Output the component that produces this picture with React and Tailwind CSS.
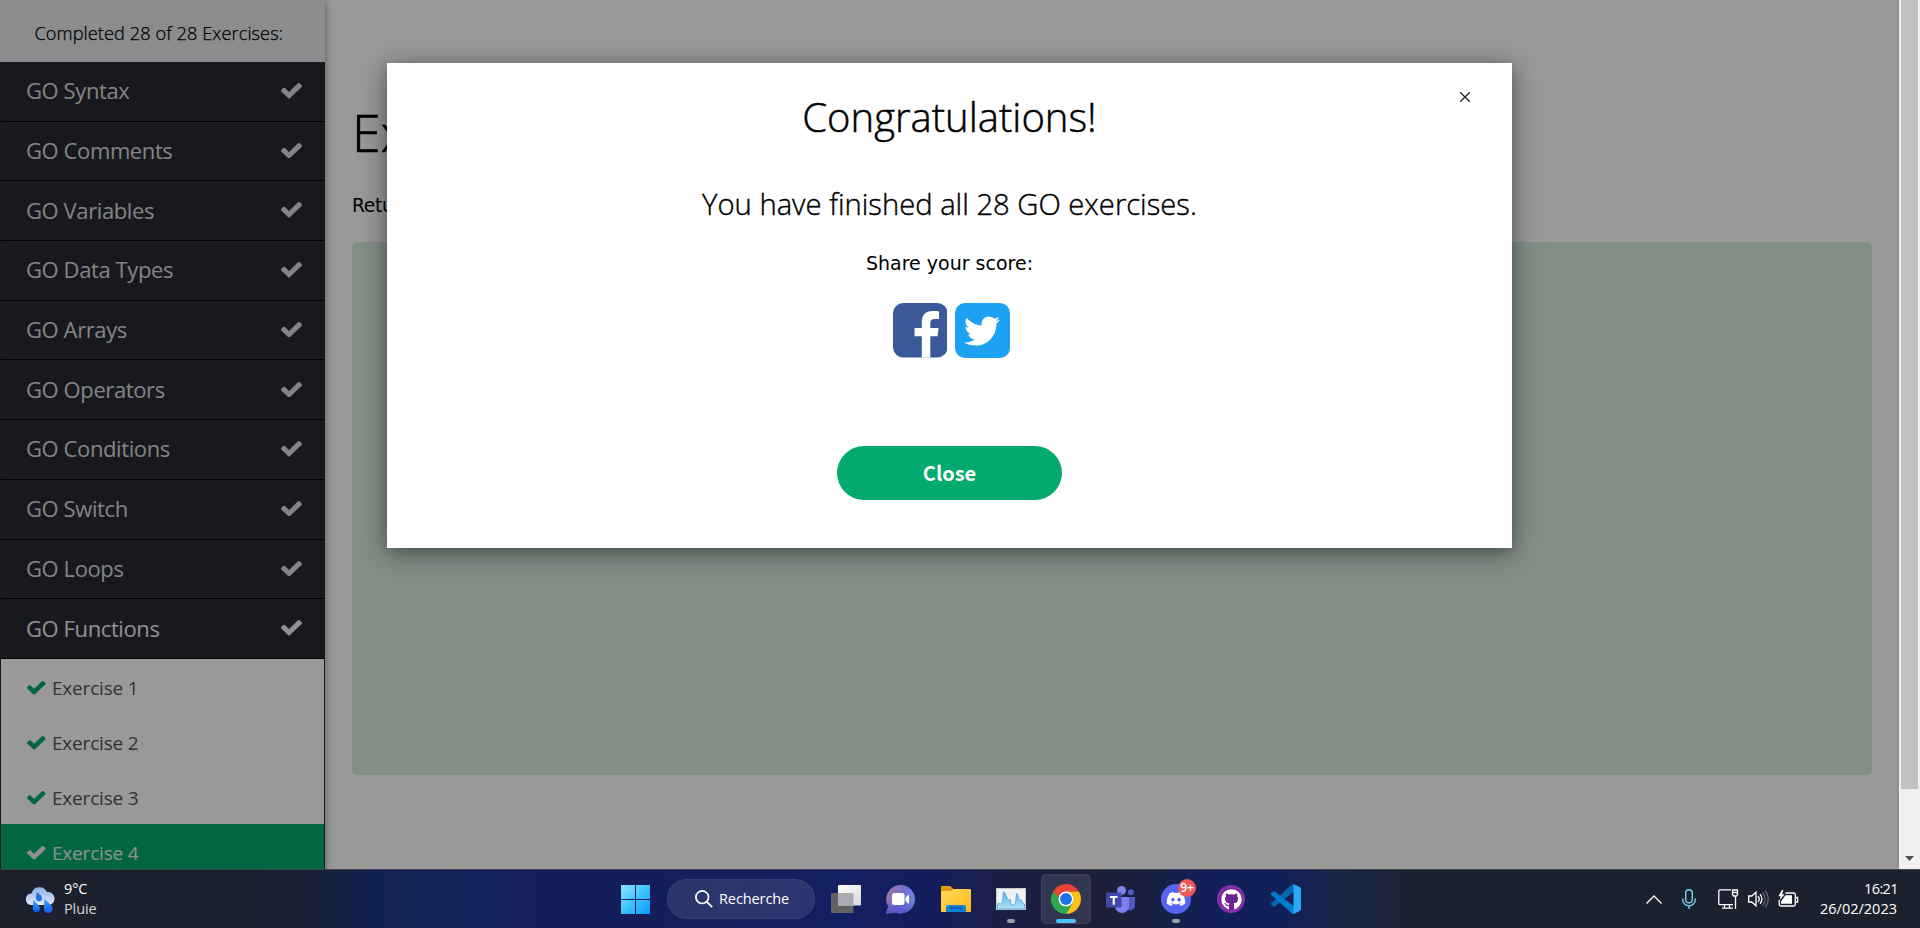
import { FaTwitter, FaDiscord, FaGithub } from "react-icons/fa";

const TOPICS = [
  "GO Syntax",
  "GO Comments",
  "GO Variables",
  "GO Data Types",
  "GO Arrays",
  "GO Operators",
  "GO Conditions",
  "GO Switch",
  "GO Loops",
  "GO Functions",
];

const EXERCISES = ["Exercise 1", "Exercise 2", "Exercise 3", "Exercise 4"];

function Check({ className }) {
  return (
    <svg viewBox="121 334 1550 1188" preserveAspectRatio="none" fill="currentColor" className={className}>
      <path d="M1671 566q0 40-28 68l-724 724-136 136q-28 28-68 28t-68-28l-136-136-362-362q-28-28-28-68t28-68l136-136q28-28 68-28t68 28l294 295 656-657q28-28 68-28t68 28l136 136q28 28 28 68z" />
    </svg>
  );
}

function Sidebar() {
  return (
    <aside className="flex h-[869px] w-[325px] shrink-0 flex-col overflow-hidden bg-[#282a35] shadow-[0_2px_8px_rgba(0,0,0,0.45)]">
      <div className="flex h-[62px] shrink-0 items-center bg-[#e7e9eb] pt-[5px] pl-[34.5px] font-['Open_Sans'] text-[18.2px] font-light tracking-[0.07px] whitespace-nowrap text-black [-webkit-text-stroke:0.25px]">
        Completed 28 of 28 Exercises:
      </div>
      <nav className="px-px">
        {TOPICS.map((topic, i) => (
          <div
            key={topic}
            className={
              "flex h-[59.7px] items-center justify-between border-b border-black pr-[22px] pl-[25px] " +
              (i === TOPICS.length - 1 ? "text-[#f1f1f1]" : "text-[#dddddd]")
            }
          >
            <span className="mb-[2px] font-['Open_Sans'] text-[22px] leading-[30px] tracking-[-0.4px]">{topic}</span>
            <Check className="mb-[1px] h-[15.5px] w-[21px]" />
          </div>
        ))}
      </nav>
      <div className="mx-px flex-1 bg-white">
        {EXERCISES.map((exercise, i) => (
          <div
            key={exercise}
            className={
              "flex h-[55px] items-center pt-[3px] pl-[26px] " + (i === 3 ? "bg-[#04aa6d] text-[#f1f1f1]" : "text-[#555555]")
            }
          >
            <Check className={"h-[13.5px] w-[18.5px] " + (i === 3 ? "" : "text-[#04aa6d]")} />
            <span className="ml-[6.5px] font-['Open_Sans'] text-[19px] leading-[26px] tracking-[-0.2px]">{exercise}</span>
          </div>
        ))}
      </div>
    </aside>
  );
}

function Modal() {
  return (
    <div className="absolute top-[63px] left-[387px] flex h-[485px] w-[1125px] flex-col items-center bg-white text-black shadow-[0_4px_18px_rgba(0,0,0,0.35),0_6px_32px_rgba(0,0,0,0.2)]">
      <svg viewBox="0 0 10 10" className="absolute top-[29px] left-[1072.5px] size-[10px]" stroke="#222" strokeWidth="1.3" fill="none">
        <path d="M0.3 0.3 9.7 9.7M9.7 0.3 0.3 9.7" />
      </svg>
      <h2 className="mt-[27px] font-['Open_Sans'] text-[40px] leading-[54px] font-light [-webkit-text-stroke:0.5px]">
        Congratulations!
      </h2>
      <p className="mt-[40px] font-['Open_Sans'] text-[29.2px] leading-[40px] font-light [-webkit-text-stroke:0.4px]">
        You have finished all 28 GO exercises.
      </p>
      <p className="mt-[26px] font-['DejaVu_Sans'] text-[19px] leading-[26px]">Share your score:</p>
      <div className="mt-[27px] ml-[3px] flex gap-[8px]">
        <svg viewBox="0 0 53 54.5" preserveAspectRatio="none" className="h-[54.5px] w-[54.5px]">
          <rect width="53" height="54.5" rx="10" fill="#3b5998" />
          <path
            fill="#fff"
            d="M28 54.5V33.3H21V25h7v-6.2C28 12 31.8 8 38.6 8c2.4 0 4.6.1 6.2.4V16h-4c-3.2 0-4.5 1.3-4.5 4.2V25h8.1l-1.1 8.3h-7v21.2z"
          />
        </svg>
        <div className="flex h-[54.5px] w-[54.5px] items-center justify-center rounded-[10px] bg-[#1da1f2]">
          <FaTwitter className="mt-px size-[36px] text-white" />
        </div>
      </div>
      <button className="mt-[88px] h-[54px] w-[225px] rounded-full bg-[#04aa6d] pb-px font-['Noto_Sans_CJK_SC'] text-[20px] leading-[53px] font-bold text-white">
        Close
      </button>
    </div>
  );
}

function Scrollbar() {
  return (
    <div className="flex h-[869px] w-[21px] flex-col bg-[#f0f0f0] px-[2px]">
      <div className="h-[789px] bg-[#c1c1c1]" />
      <svg viewBox="0 0 9 5" className="mt-[67px] ml-[4px] h-[5px] w-[9px]" fill="#505050">
        <path d="M0 0h9L4.5 5z" />
      </svg>
    </div>
  );
}

function WeatherIcon() {
  return (
    <svg viewBox="0 0 30 27" className="h-[27px] w-[30px]">
      <defs>
        <linearGradient id="cloud" x1="0" y1="0" x2="0" y2="1">
          <stop offset="0" stopColor="#8fb2ea" />
          <stop offset="1" stopColor="#dfe8f8" />
        </linearGradient>
        <linearGradient id="drop" x1="0" y1="0" x2="0" y2="1">
          <stop offset="0" stopColor="#4ba2f7" />
          <stop offset="1" stopColor="#0a5bef" />
        </linearGradient>
      </defs>
      <path d="M6 19a5.800 5.800 0 0 1 0-11.500h.5a8.300 8.300 0 0 1 15.500-1.500A6.500 6.500 0 0 1 24 19z" fill="url(#cloud)" />
      <path d="M8 14c3.500 3 7 6 7 8.500a3.600 3.600 0 0 1-7.200 0c0-3 .8-5 .2-8.500z" fill="url(#drop)" />
      <path d="M19 13c5 3.500 8.500 7 8.500 9.800a4.300 4.300 0 0 1-8.600 0c0-3 .8-6 .1-9.800z" fill="url(#drop)" />
      <path d="M11.500 6c3.200 2.200 5.500 4 5.500 6.300a3 3 0 0 1-6 0c0-2.300.8-3.500.5-6.300z" fill="#1a73e8" />
    </svg>
  );
}

function WindowsIcon() {
  return (
    <svg viewBox="0 0 29 29" className="size-[29px]">
      <defs>
        <linearGradient id="win" gradientUnits="userSpaceOnUse" x1="0" y1="0" x2="29" y2="29">
          <stop offset="0" stopColor="#8be4ff" />
          <stop offset="0.5" stopColor="#3fc4fd" />
          <stop offset="1" stopColor="#0a96fb" />
        </linearGradient>
      </defs>
      <path fill="url(#win)" d="M0 0h14v14H0zM15 0h14v14H15zM0 15h14v14H0zM15 15h14v14H15z" />
    </svg>
  );
}

function TaskViewIcon() {
  return (
    <svg viewBox="0 0 30 28" className="h-[28px] w-[30px]">
      <defs>
        <linearGradient id="tv" x1="0" y1="0" x2="1" y2="1">
          <stop offset="0" stopColor="#fff" />
          <stop offset="1" stopColor="#d8d8da" />
        </linearGradient>
      </defs>
      <rect y="8" width="22.500" height="20" rx="1" fill="#626264" />
      <rect x="7" width="23" height="20.500" rx="1" fill="url(#tv)" />
      <path d="M7 8h15.500v12.500H7z" fill="#acacb0" />
    </svg>
  );
}

function ChatIcon() {
  return (
    <svg viewBox="0 0 29 29" className="mr-px size-[29px]">
      <defs>
        <linearGradient id="chat" x1="0" y1="0.200" x2="1" y2="0.600">
          <stop offset="0" stopColor="#a673a6" />
          <stop offset="0.550" stopColor="#6f6fd0" />
          <stop offset="1" stopColor="#6b8be8" />
        </linearGradient>
        <linearGradient id="chatShade" x1="0" y1="0" x2="0" y2="1">
          <stop offset="0.500" stopColor="#5557c8" stopOpacity="0" />
          <stop offset="1" stopColor="#5557c8" />
        </linearGradient>
      </defs>
      <path d="M14.500 0a14.200 14.200 0 1 1-5 27.400L1 28.500c-.8 0-1-.6-.7-1.200L2.300 21.500A14.200 14.200 0 0 1 14.500 0z" fill="url(#chat)" />
      <path d="M14.500 0a14.200 14.200 0 1 1-5 27.400L1 28.500c-.8 0-1-.6-.7-1.200L2.300 21.500A14.200 14.200 0 0 1 14.500 0z" fill="url(#chatShade)" />
      <rect x="6" y="8" width="12.500" height="12" rx="2.200" fill="#fff" />
      <path d="M19.500 12.500 23 9.500v9.500l-3.500-3z" fill="#fff" />
    </svg>
  );
}

function FolderIcon() {
  return (
    <svg viewBox="0 0 30 26" className="h-[26px] w-[30px]">
      <defs>
        <linearGradient id="folder" x1="0" y1="0" x2="1" y2="1">
          <stop offset="0" stopColor="#ffdb61" />
          <stop offset="1" stopColor="#fcb813" />
        </linearGradient>
      </defs>
      <path d="M0 1.200C0 .5.500 0 1.200 0h8l3.500 3.200V8H0z" fill="#e09f05" />
      <path d="M0 5h10l3-2h16c.6 0 1 .4 1 1v21c0 .6-.4 1-1 1H1c-.6 0-1-.4-1-1z" fill="url(#folder)" />
      <path d="M5 26v-4.500c0-1.500 1-2.500 2.500-2.500h15c1.500 0 2.500 1 2.500 2.500V26z" fill="#0f7fd8" />
      <path d="M8.500 22h13" stroke="#0a4f99" strokeWidth="1.200" />
    </svg>
  );
}

function MonitorIcon() {
  return (
    <svg viewBox="0 0 30 22" className="h-[22px] w-[30px]">
      <defs>
        <linearGradient id="mon" x1="0" y1="0" x2="0" y2="1">
          <stop offset="0" stopColor="#4fb3ea" />
          <stop offset="1" stopColor="#b5e3f8" />
        </linearGradient>
      </defs>
      <rect x="0.500" y="0.500" width="29" height="21" fill="#f1f2f4" stroke="#c4c7cc" />
      <path
        d="M1.500 21v-5l2-1 1.500 1.500L6.500 14 7.500 4l1.500 1 2 5 1.500 2.500L14 11l1 5.500 3 .5 1.500-2L20.500 6 21.500 5.500l1 5.500 1.500 2 1-1.500 1.500 3.500 2 1V21z"
        fill="url(#mon)"
        stroke="#4da6d8"
        strokeWidth="0.800"
      />
    </svg>
  );
}

function ChromeIcon() {
  return (
    <svg viewBox="0 0 48 48" className="size-[30px]">
      <path d="M24 24 3.220 12A24 24 0 0 1 44.780 12H24z" fill="#ea4335" />
      <path d="M44.780 12A24 24 0 0 1 24 48L34.390 30 34.390 18 24 12z" fill="#fbc116" />
      <path d="M24 48A24 24 0 0 1 3.220 12L13.610 30 24 36l10.390-6z" fill="#2da94f" />
      <path d="M3.220 12 13.610 30 24 24V12z" fill="#ea4335" />
      <path d="M3.220 12 13.610 30 16 33 22 30z" fill="#2da94f" />
      <circle cx="24" cy="24" r="12" fill="#fff" />
      <circle cx="24" cy="24" r="9.500" fill="#1a73e8" />
    </svg>
  );
}

function TeamsIcon() {
  return (
    <svg viewBox="0 0 29 27" className="mr-px h-[27px] w-[29px]">
      <circle cx="24.800" cy="6.300" r="3" fill="#5059c9" />
      <path d="M20 11h8c.6 0 1 .4 1 1v7.500a5 5 0 0 1-5 5c-2 0-4-1-4-3z" fill="#5059c9" />
      <circle cx="15.500" cy="4.500" r="4.500" fill="#7b83eb" />
      <path d="M9 11h13c.6 0 1 .4 1 1v8a7 7 0 0 1-14 0z" fill="#7b83eb" />
      <rect y="6.500" width="15.500" height="15" rx="1" fill="#4048ab" />
      <path d="M4 10h7.500v2H8.800v6.800H6.700V12H4z" fill="#fff" />
    </svg>
  );
}

function DiscordIcon() {
  return (
    <div className="relative flex size-[30px] items-center justify-center rounded-full bg-[#5865f2]">
      <FaDiscord className="size-[20px] text-white" />
      <div className="absolute top-[-5px] left-[17px] flex size-[18px] items-center justify-center rounded-full bg-[#f0595a] font-['Open_Sans'] text-[12px] leading-none font-semibold text-white">
        9+
      </div>
    </div>
  );
}

function GithubIcon() {
  return (
    <div className="flex size-[28px] items-center justify-center rounded-full bg-[#8530a8]">
      <div className="flex size-[22px] items-center justify-center rounded-full bg-[#6d2493]">
        <FaGithub className="size-[21px] text-white" />
      </div>
    </div>
  );
}

function VsCodeIcon() {
  return (
    <svg viewBox="0 0 100 100" className="size-[30px]">
      <path d="M96.500 10.800 75.900.9a6.200 6.200 0 0 0-7.100 1.200L1.300 63.600a4.200 4.200 0 0 0 0 6.200l5.500 5a4.200 4.200 0 0 0 5.300.2l81.200-61.600c2.700-2 6.600-.1 6.600 3.300v-.2c0-2.500-1.300-4.700-3.400-5.700z" fill="#0065a9" />
      <path d="m96.500 89.200-20.600 9.900a6.200 6.200 0 0 1-7.100-1.200L1.300 36.400a4.200 4.200 0 0 1 0-6.200l5.500-5a4.200 4.200 0 0 1 5.300-.2l81.200 61.600c2.700 2 6.600.1 6.600-3.300v.2c0 2.500-1.300 4.700-3.400 5.700z" fill="#007acc" />
      <path d="M75.900 99.100a6.200 6.200 0 0 1-7.100-1.200c2.300 2.300 6.200.7 6.200-2.600V4.700c0-3.300-3.900-4.900-6.200-2.600A6.200 6.200 0 0 1 75.900.9l20.600 9.900c2.100 1 3.500 3.200 3.500 5.600v67.200c0 2.400-1.400 4.600-3.500 5.600z" fill="#29a8f5" />
    </svg>
  );
}

function TaskbarItem({ children, active, dot }) {
  return (
    <div
      className={
        "relative flex h-[50px] w-[50px] items-center justify-center rounded-[5px] " +
        (active ? "bg-white/10 ring-1 ring-white/5 ring-inset" : "")
      }
    >
      {children}
      {active && <span className="absolute bottom-px left-[15px] h-[4px] w-[20px] rounded-full bg-[#4cc2ff]" />}
      {dot && <span className="absolute bottom-px left-[21px] h-[4px] w-[8px] rounded-full bg-[#9a9ca8]" />}
    </div>
  );
}

function Tray() {
  return (
    <div className="ml-auto flex items-center pr-[23px]">
      <svg viewBox="0 0 16 9" className="h-[9px] w-[16px]" fill="none" stroke="#fff" strokeWidth="1.300">
        <path d="M.5 8.500 8 1l7.500 7.500" />
      </svg>
      <svg viewBox="0 0 14 20" className="ml-[20px] h-[20px] w-[14px]" fill="none" stroke="#7cd0e8" strokeWidth="1.400">
        <rect x="3.700" y="0.700" width="6.600" height="13" rx="3.300" />
        <path d="M.7 9.500v1.200a6.300 6 0 0 0 12.600 0V9.500M7 16.700V20" />
      </svg>
      <svg viewBox="0 0 21 20" className="ml-[22px] h-[20px] w-[21px]" fill="none" stroke="#fff" strokeWidth="1.300">
        <path d="M13 .8H2A1.200 1.200 0 0 0 .8 2v12.500A1.200 1.200 0 0 0 2 15.700h13M4 19.200h11M6.500 16v3M11.500 16v3" />
        <path d="M14.500 1h5v4.500l-1 1.500h-3l-1-1.500zM17.500 7v13M14.500 3.500h5" />
      </svg>
      <svg viewBox="0 0 21 18" className="ml-[9px] h-[18px] w-[21px]" fill="none" stroke="#fff" strokeWidth="1.300">
        <path d="M.7 6v6h3L8 15.800V2.200L3.700 6z" />
        <path d="M10 6.300a4 4 0 0 1 0 5.400M12 4.200a7 7 0 0 1 0 9.600" />
        <path d="M14.500 2.500a9.500 9.500 0 0 1 0 13M17 .8a12 12 0 0 1 0 16.400" stroke="#5b606b" />
      </svg>
      <svg viewBox="0 0 21 18" className="ml-[9px] h-[18px] w-[21px]" fill="none" stroke="#fff" strokeWidth="1.300">
        <path d="M7.500 3h8A1.800 1.800 0 0 1 17.300 4.800v9.400A1.800 1.800 0 0 1 15.500 16H3A1.800 1.800 0 0 1 1.200 14.200V10M18 7.500h1.600v4.500H18" />
        <path d="M3 13.800V11.500L7.500 5.200h6.500v8.600z" fill="#fff" stroke="none" />
        <path d="M4 0 .3 6.200H2.800L1.600 10.500 6.600 4.200H4L5.500 0z" fill="#fff" stroke="none" />
      </svg>
      <div className="flex w-[98px] flex-col items-end font-['Open_Sans'] text-[14.5px] leading-[20px] text-white">
        <span className="-mr-px tracking-[-0.6px]">16:21</span>
        <span>26/02/2023</span>
      </div>
    </div>
  );
}

function Taskbar() {
  return (
    <footer className="flex h-[59px] w-full items-center border-t border-[#41444d] bg-[linear-gradient(90deg,#1d212b_0px,#1a222f_200px,#1a2234_300px,#12224f_370px,#12215a_480px,#151d5a_620px,#14205c_720px,#121f62_850px,#151e5c_930px,#1a1f4a_990px,#1c2038_1090px,#1a203e_1140px,#12205a_1210px,#12205a_1280px,#182445_1340px,#1b2230_1420px,#1b212d_1900px)]">
      <div className="flex w-[610.5px] items-center pl-[25px]">
        <WeatherIcon />
        <div className="ml-[9px] flex flex-col font-['Open_Sans'] text-[14.5px] leading-[20px] tracking-[-0.1px] text-white">
          <span>9°C</span>
          <span className="text-[#d3d5d9]">Pluie</span>
        </div>
      </div>
      <TaskbarItem><WindowsIcon /></TaskbarItem>
      <div className="mr-[6px] ml-[6.500px] flex h-[40px] w-[148px] items-center rounded-full border border-white/5 bg-white/10 pl-[27px]">
        <svg viewBox="0 0 18 18" className="size-[18px]" fill="none" stroke="#fff" strokeWidth="1.700">
          <circle cx="7.200" cy="7.200" r="6.300" />
          <path d="m11.800 11.800 5.400 5.400" />
        </svg>
        <span className="ml-[6px] font-['Open_Sans'] text-[14.5px] leading-[20px] tracking-[-0.1px] text-white">Recherche</span>
      </div>
      <div className="flex gap-[5px]">
        <TaskbarItem><TaskViewIcon /></TaskbarItem>
        <TaskbarItem><ChatIcon /></TaskbarItem>
        <TaskbarItem><FolderIcon /></TaskbarItem>
        <TaskbarItem dot><MonitorIcon /></TaskbarItem>
        <TaskbarItem active><ChromeIcon /></TaskbarItem>
        <TaskbarItem><TeamsIcon /></TaskbarItem>
        <TaskbarItem dot><DiscordIcon /></TaskbarItem>
        <TaskbarItem><GithubIcon /></TaskbarItem>
        <TaskbarItem><VsCodeIcon /></TaskbarItem>
      </div>
      <Tray />
    </footer>
  );
}

export default function App() {
  return (
    <div className="flex h-[928px] w-[1920px] flex-col overflow-hidden bg-white">
      <div className="relative flex h-[869px]">
        <div className="relative flex w-[1899px] overflow-hidden border-r-2 border-[#909090] bg-white">
          <Sidebar />
          <main className="flex flex-1 flex-col pr-[25px] pl-[27px] text-black">
            <h1 className="mt-[96px] font-['Open_Sans'] text-[52px] leading-[72px] font-light [-webkit-text-stroke:0.7px]">Exercise:</h1>
            <p className="mt-[25px] font-['DejaVu_Sans'] text-[18.7px] leading-[26px] tracking-[-0.3px]">Return</p>
            <div className="mt-[23px] h-[533px] rounded-[5px] bg-[#d9eee1]" />
          </main>
          <div className="absolute inset-0 bg-black/40" />
        </div>
        <Scrollbar />
        <Modal />
      </div>
      <Taskbar />
    </div>
  );
}
